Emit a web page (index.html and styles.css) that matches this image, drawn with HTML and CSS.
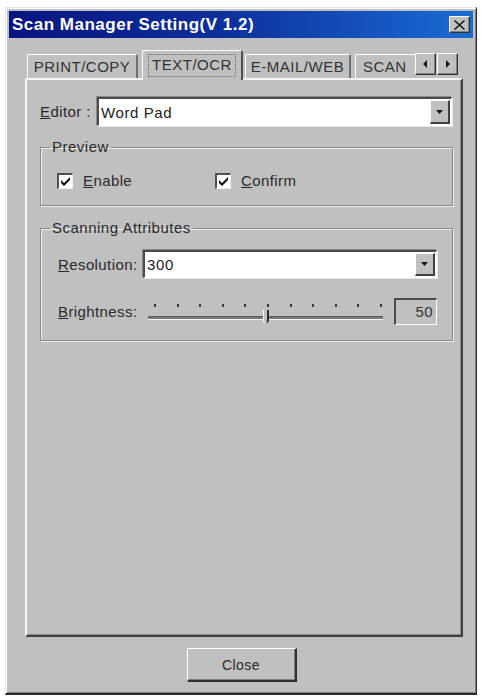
FILE: index.html
```html
<!DOCTYPE html>
<html>
<head>
<meta charset="utf-8">
<title>Scan Manager Setting</title>
<link rel="stylesheet" href="styles.css">
</head>
<body>
<div class="window">
  <div class="titlebar">
    <span class="title">Scan Manager Setting(V 1.2)</span>
    <span class="close-btn">
      <svg width="11" height="10" viewBox="0 0 11 10"><path d="M1 0 L5.5 4 L10 0 L11 1 L6.5 5 L11 9 L10 10 L5.5 6 L1 10 L0 9 L4.5 5 L0 1 Z" fill="#111"/></svg>
    </span>
  </div>
  <div class="content">
    <div class="tabstrip">
      <div class="tab tab-print">PRINT/COPY</div>
      <div class="tab tab-text active"><span class="focus">TEXT/OCR</span></div>
      <div class="tab tab-mail">E-MAIL/WEB</div>
      <div class="tab tab-scan">SCAN</div>
      <div class="scroll">
        <span class="arrow-btn"><svg width="5" height="8" viewBox="0 0 5 8"><path d="M4 0 L0 4 L4 8 Z" fill="#111"/></svg></span>
        <span class="arrow-btn"><svg width="5" height="8" viewBox="0 0 5 8"><path d="M1 0 L5 4 L1 8 Z" fill="#111"/></svg></span>
      </div>
    </div>
    <div class="panel">
      <div class="row editor-row">
        <span class="label editor-label"><u>E</u>ditor :</span>
        <div class="combo editor-combo">
          <span class="combo-text">Word Pad</span>
          <span class="drop-btn"><svg width="7" height="4" viewBox="0 0 7 4"><path d="M0 0 H7 L3.5 4 Z" fill="#111"/></svg></span>
        </div>
      </div>
      <fieldset class="group preview">
        <legend>Preview</legend>
        <div class="checks">
          <label class="check check-enable"><span class="box"><svg width="11" height="10" viewBox="0 0 11 10"><path d="M1 4 L4 7 L10 1 L10 4 L4 10 L1 7 Z" fill="#111"/></svg></span><span><u>E</u>nable</span></label>
          <label class="check"><span class="box"><svg width="11" height="10" viewBox="0 0 11 10"><path d="M1 4 L4 7 L10 1 L10 4 L4 10 L1 7 Z" fill="#111"/></svg></span><span><u>C</u>onfirm</span></label>
        </div>
      </fieldset>
      <fieldset class="group scanning">
        <legend>Scanning Attributes</legend>
        <div class="attrs">
          <div class="row res-row">
            <span class="label attr-label"><u>R</u>esolution:</span>
            <div class="combo res-combo">
              <span class="combo-text">300</span>
              <span class="drop-btn"><svg width="7" height="4" viewBox="0 0 7 4"><path d="M0 0 H7 L3.5 4 Z" fill="#111"/></svg></span>
            </div>
          </div>
          <div class="row bright-row">
            <span class="label attr-label"><u>B</u>rightness:</span>
            <div class="slider">
              <div class="ticks">
                <i></i><i></i><i></i><i></i><i></i><i></i><i></i><i></i><i></i><i></i><i></i>
              </div>
              <div class="track"></div>
              <span class="thumb"></span>
            </div>
            <div class="value-box">50</div>
          </div>
        </div>
      </fieldset>
    </div>
    <div class="footer">
      <button class="btn">Close</button>
    </div>
  </div>
</div>
</body>
</html>
```

FILE: styles.css
```css
* { box-sizing: border-box; }

body {
  margin: 0;
  padding: 7px 0 0 5px;
  background: #ffffff;
  font-family: "Liberation Sans", Arial, sans-serif;
  font-size: 15px;
  letter-spacing: 0.4px;
  color: #2a2a2a;
}

.window {
  width: 472px;
  height: 688px;
  background: #c0c0c0;
  border-top: 1px solid #e4e4e4;
  border-left: 1px solid #e4e4e4;
  border-right: 1px solid #2a2a2a;
  border-bottom: 2px solid #2a2a2a;
  box-shadow: inset 1px 1px 0 #ffffff, inset -1px -1px 0 #808080;
  padding: 3px;
  display: flex;
  flex-direction: column;
}

.titlebar {
  height: 27px;
  background: linear-gradient(90deg, #0a1480 0%, #0d2f9c 45%, #1a6cd4 100%);
  display: flex;
  align-items: center;
  justify-content: space-between;
  padding: 0 3px 0 3px;
}

.title {
  color: #ffffff;
  font-weight: bold;
  font-size: 17px;
  letter-spacing: 0.5px;
}

.close-btn {
  width: 21px;
  height: 17px;
  background: #c0c0c0;
  border-top: 1px solid #ffffff;
  border-left: 1px solid #ffffff;
  border-right: 1px solid #303030;
  border-bottom: 1px solid #303030;
  box-shadow: inset -1px -1px 0 #808080;
  display: flex;
  align-items: center;
  justify-content: center;
}

.content {
  flex: 1;
  padding: 12px 10px 0 16px;
  display: flex;
  flex-direction: column;
}

.tabstrip {
  height: 28px;
  display: flex;
  align-items: flex-end;
  padding-left: 2px;
  font-size: 15px;
  color: #333;
}

.tab {
  height: 24px;
  display: flex;
  align-items: center;
  justify-content: center;
  border-top: 1px solid #ffffff;
  border-left: 1px solid #ffffff;
  border-right: 2px solid #707070;
  border-radius: 2px 2px 0 0;
  background: #c0c0c0;
  letter-spacing: 0.5px;
  white-space: nowrap;
  overflow: hidden;
}

.tab-print { width: 111px; margin-right: 4px; }
.tab-text { width: 101px; }
.tab-mail { width: 106px; margin-left: 2px; }
.tab-scan { width: 60px; margin-left: 4px; border-right: none; justify-content: flex-start; padding-left: 7px; }

.tab.active {
  height: 30px;
  margin-bottom: -2px;
  position: relative;
  z-index: 1;
  align-items: flex-start;
  padding-top: 3px;
  border-right-color: #505050;
  border-left: 1px solid #ffffff;
}

.focus {
  border: 1px dotted #6a6a6a;
  padding: 1px 3px 2px 3px;
  line-height: 18px;
}

.scroll {
  align-self: flex-start;
  margin-top: 3px;
  display: flex;
  gap: 1px;
}

.arrow-btn {
  width: 21px;
  height: 22px;
  background: #c0c0c0;
  border-top: 1px solid #ffffff;
  border-left: 1px solid #ffffff;
  border-right: 1px solid #303030;
  border-bottom: 1px solid #303030;
  box-shadow: inset -1px -1px 0 #808080;
  display: flex;
  align-items: center;
  justify-content: center;
}

.panel {
  height: 559px;
  width: 438px;
  border-top: 2px solid #f4f4f4;
  border-left: 2px solid #f4f4f4;
  border-right: 2px solid #404040;
  border-bottom: 2px solid #404040;
  box-shadow: inset -1px -1px 0 #8a8a8a;
  padding: 17px 8px 0 13px;
}

.row {
  display: flex;
  align-items: center;
}

.label {
  white-space: nowrap;
}

.editor-label { width: 57px; }

.combo {
  height: 29px;
  background: #ffffff;
  border-top: 2px solid #4a4a4a;
  border-left: 2px solid #4a4a4a;
  border-right: 1px solid #ffffff;
  border-bottom: 1px solid #ffffff;
  box-shadow: 1px 1px 0 #e8e8e8, -1px -1px 0 #8a8a8a;
  display: flex;
  align-items: center;
  justify-content: space-between;
  padding: 1px 1px 1px 2px;
}

.editor-combo { width: 355px; }

.combo-text { color: #222; letter-spacing: 0.6px; }

.drop-btn {
  width: 20px;
  height: 100%;
  background: #c0c0c0;
  border-top: 1px solid #ffffff;
  border-left: 1px solid #ffffff;
  border-right: 2px solid #404040;
  border-bottom: 2px solid #404040;
  display: flex;
  align-items: center;
  justify-content: center;
}

.group {
  margin: 0;
  border: 1px solid #8a8a8a;
  box-shadow: 1px 1px 0 #ececec, inset 1px 1px 0 #ececec;
  padding: 0;
}

.group legend {
  padding: 0 2px;
  margin-left: 9px;
  line-height: 16px;
  letter-spacing: 0.5px;
}

.preview {
  margin-top: 13px;
  height: 67px;
}

.checks {
  display: flex;
  align-items: center;
  padding: 17px 10px 0 16px;
}

.check {
  display: flex;
  align-items: center;
  gap: 10px;
}

.check-enable { width: 158px; }

.box {
  width: 16px;
  height: 16px;
  background: #ffffff;
  border-top: 2px solid #505050;
  border-left: 2px solid #505050;
  border-right: 1px solid #f0f0f0;
  border-bottom: 1px solid #f0f0f0;
  display: flex;
  align-items: center;
  justify-content: center;
}

.scanning {
  margin-top: 14px;
  height: 121px;
}

.attrs {
  padding: 14px 15px 0 17px;
}

.attr-label { width: 85px; }

.res-combo { width: 294px; height: 28px; }

.bright-row {
  margin-top: 20px;
  height: 27px;
}

.slider {
  width: 247px;
  height: 27px;
  position: relative;
}

.ticks {
  margin: 6px 0 0 11px;
  width: 228px;
  height: 3px;
  display: flex;
  justify-content: space-between;
}

.ticks i {
  display: block;
  width: 2px;
  height: 3px;
  background: #3a3a3a;
}

.track {
  margin: 9px 0 0 5px;
  width: 235px;
  height: 4px;
  background: #7a7a7a;
  border-top: 1px solid #5a5a5a;
  border-bottom: 1px solid #f4f4f4;
}

.thumb {
  position: absolute;
  left: 120px;
  top: 12px;
  width: 6px;
  height: 13px;
  background: #c0c0c0;
  border-left: 1px solid #ffffff;
  border-right: 2px solid #303030;
  border-radius: 0 0 3px 3px;
}

.value-box {
  margin-left: auto;
  width: 43px;
  height: 27px;
  border-top: 2px solid #4a4a4a;
  border-left: 2px solid #4a4a4a;
  border-right: 1px solid #ffffff;
  border-bottom: 1px solid #ffffff;
  text-align: right;
  padding: 3px 3px 0 0;
  color: #333;
}

.footer {
  display: flex;
  justify-content: center;
  padding-top: 11px;
  padding-right: 5px;
}

.btn {
  width: 110px;
  height: 34px;
  background: #c0c0c0;
  font-family: "Liberation Sans", Arial, sans-serif;
  font-size: 14px;
  letter-spacing: 0.4px;
  color: #2a2a2a;
  border-top: 1px solid #ffffff;
  border-left: 1px solid #ffffff;
  border-right: 2px solid #303030;
  border-bottom: 2px solid #303030;
  box-shadow: inset -1px -1px 0 #808080;
  padding: 0;
}
```
